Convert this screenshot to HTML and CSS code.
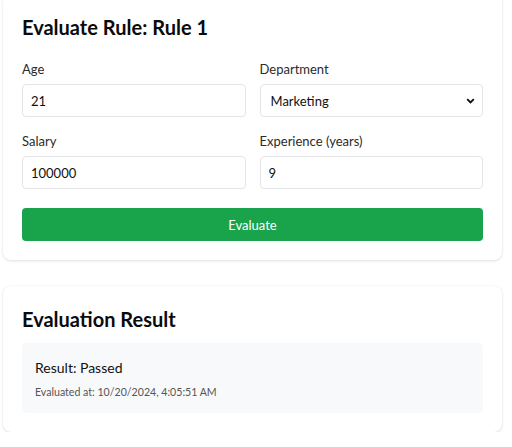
FILE: index.html
```html
<!DOCTYPE html>
<html>
<head>
<meta charset="utf-8">
<link rel="stylesheet" href="styles.css">
</head>
<body>
<div class="page">
  <section class="card card-top">
    <h2 class="title">Evaluate Rule: Rule 1</h2>
    <div class="grid">
      <div class="field">
        <label class="label">Age</label>
        <input class="input" type="text" value="21">
      </div>
      <div class="field">
        <label class="label">Department</label>
        <div class="select-wrap">
          <select class="input select"><option>Marketing</option></select>
          <svg class="chevron" width="9" height="6" viewBox="0 0 9 6"><path d="M1.2 1.2 L4.5 4.5 L7.8 1.2" fill="none" stroke="#111" stroke-width="1.9"/></svg>
        </div>
      </div>
      <div class="field">
        <label class="label">Salary</label>
        <input class="input" type="text" value="100000">
      </div>
      <div class="field">
        <label class="label">Experience (years)</label>
        <input class="input" type="text" value="9">
      </div>
    </div>
    <button class="button">Evaluate</button>
  </section>
  <section class="card card-result">
    <h2 class="title title-result">Evaluation Result</h2>
    <div class="result-box">
      <p class="result">Result: Passed</p>
      <p class="time">Evaluated at: 10/20/2024, 4:05:51 AM</p>
    </div>
  </section>
</div>
</body>
</html>
```
FILE: styles.css
```css
* { box-sizing: border-box; }
html, body { margin: 0; padding: 0; background: #ffffff; }
body { font-family: "Lato", "Noto Sans", sans-serif; color: #111; overflow: hidden; }
.page { width: 502px; padding-left: 3px; margin-top: -6px; }
.card {
  background: #fff;
  border-radius: 8px;
  box-shadow: 0 1px 3px rgba(0,0,0,0.12), 0 0 1px rgba(0,0,0,0.08);
  padding: 19px;
}
.card-result { margin-top: 26px; }
.title { margin: 0 0 19px; font-size: 20px; line-height: 28px; font-weight: 700; color: #0b0b0b; }
.title-result { margin-bottom: 10px; }
.grid { display: grid; grid-template-columns: 1fr 1fr; column-gap: 14px; row-gap: 15px; }
.field { display: flex; flex-direction: column; }
.label { font-size: 13px; line-height: 18px; color: #2b2b2b; margin-bottom: 6px; }
.input {
  height: 33px;
  border: 1px solid #e3e5e8;
  border-radius: 4px;
  padding: 0 8px;
  font: inherit;
  font-size: 13px;
  color: #111;
  background: #fff;
  width: 100%;
  outline: none;
}
.select-wrap { position: relative; }
.select { appearance: none; -webkit-appearance: none; padding-left: 10px; }
.chevron { position: absolute; right: 8px; top: 14px; pointer-events: none; }
.button {
  display: block;
  margin-top: 19px;
  width: 100%;
  height: 33px;
  border: none;
  border-radius: 4px;
  background: #19a34b;
  color: #fff;
  font: inherit;
  font-size: 13px;
}
.result-box { background: #f8f9fb; border-radius: 4px; padding: 15px 13px 14px; }
.result { margin: 0; font-size: 14px; line-height: 20px; color: #111; }
.time { margin: 7px 0 0; font-size: 10.6px; line-height: 14px; color: #555; }
```
